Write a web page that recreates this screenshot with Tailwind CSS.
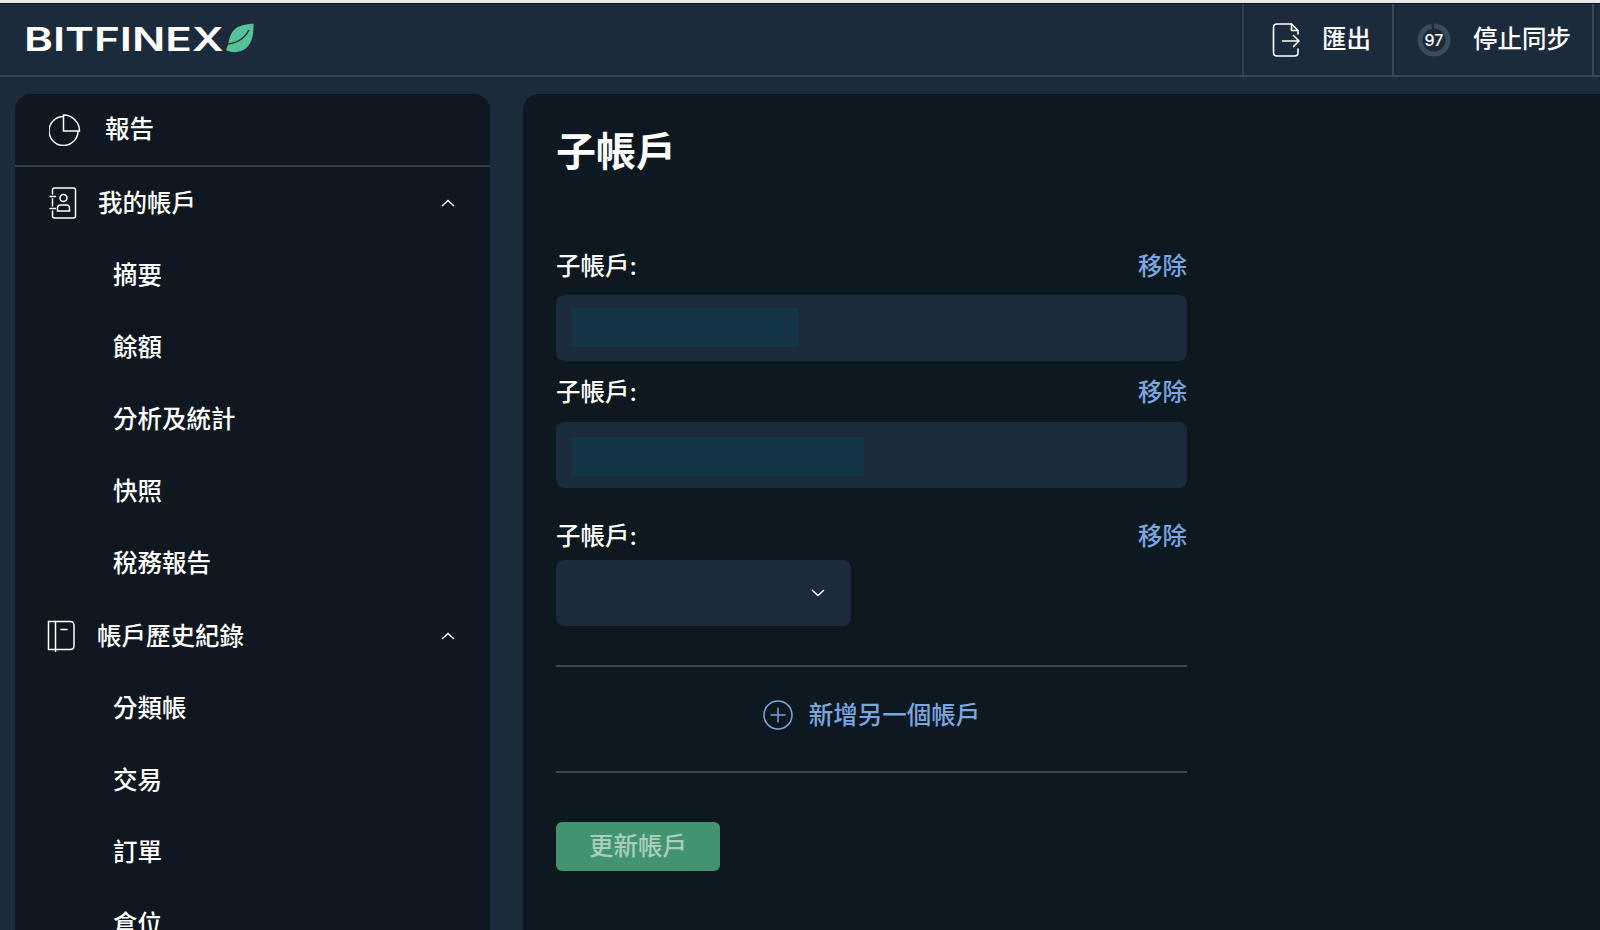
<!doctype html>
<html lang="zh-Hant">

<head>
    <meta charset="UTF-8">
    <meta name="viewport" content="width=device-width, initial-scale=1.0">
    <title>Bitfinex 子帳戶</title>
    <script src="https://cdn.jsdelivr.net/npm/@tailwindcss/browser@4"></script>
</head>

<body class="h-[930px] overflow-hidden flex flex-col bg-[#1c2b3c] text-white font-['Inter','Noto_Sans_CJK_TC',sans-serif] text-[24.5px] leading-8 font-medium">
    <div class="h-[3px] bg-[#e9e9e9] shrink-0"></div>
    <div class="h-px bg-[#0b1219] shrink-0"></div>

    <!--header-->
    <header class="h-[73px] shrink-0 flex items-stretch justify-between border-b-2 border-[#36485a] pr-[6px]">
        <div class="flex items-start pl-[24px] pt-[20px]">
            <span class="block w-[146px] origin-left scale-x-[1.33] font-['Inter',sans-serif] font-semibold text-[33px] leading-[30px] whitespace-nowrap">BITFINEX</span>
            <svg class="w-[29px] h-[30px] ml-[55px] -mt-[1px]" viewBox="0 0 29 30">
                <path fill="#55c194" d="M28.5 0.5C28.8 12 27 21 20 26C14 30 6 30 1 27C5 20 3 9 13 4C18 1.500 24 1 28.500 0.500Z" />
                <path fill="none" stroke="#1c2b3c" stroke-width="1.500" d="M0 21C9 21 18 18 24 7" />
            </svg>
        </div>
        <div class="flex">
            <div class="w-[150px] flex items-center border-l-2 border-[#2f4051] pl-[28px]">
                <svg class="w-[28px] h-[34px]" viewBox="0 0 28 34" fill="none" stroke="white" stroke-width="1.600" stroke-linecap="round" stroke-linejoin="round">
                    <path d="M26 11V7.500L19.500 1H5Q1.500 1 1.500 4.500V29.500Q1.500 33 5 33H22.500Q26 33 26 29.500V26" />
                    <path d="M19.500 1V7.500H26" />
                    <path d="M10.500 18H27M21.500 12.500L27 18L21.500 23.500" />
                </svg>
                <span class="ml-[22px] pb-[2px] whitespace-nowrap">匯出</span>
            </div>
            <div class="w-[202px] flex items-center border-x-2 border-[#36485a] pl-[23px]">
                <div class="relative w-[34px] h-[34px] flex items-center justify-center">
                    <svg class="absolute inset-0 -rotate-90" viewBox="0 0 34 34" fill="none">
                        <circle cx="17" cy="17" r="14" stroke="#3a4b5c" stroke-width="5" stroke-dasharray="85 3" />
                    </svg>
                    <span class="relative text-base leading-none font-medium">97</span>
                </div>
                <span class="ml-[22px] pb-[2px] whitespace-nowrap">停止同步</span>
            </div>
        </div>
    </header>

    <div class="flex-1 min-h-0 flex gap-[33px] pl-[15px] pt-[17px]">
        <!--sidebar-->
        <aside class="w-[475px] shrink-0 bg-[#0f1821] rounded-t-2xl overflow-hidden">
            <a class="h-[73px] flex items-center border-b-2 border-[#2e3f50] pl-[34px]">
                <svg class="w-[32px] h-[32px]" viewBox="0 0 32 32" fill="none" stroke="white" stroke-width="1.500">
                    <path d="M14.500 2.500A14.500 14.500 0 1 0 29 17" />
                    <path d="M14.500 1A16 16 0 0 1 30.500 17H14.500Z" />
                </svg>
                <span class="ml-[24px] pb-[2px]">報告</span>
            </a>

            <a class="h-[72px] flex items-center pl-[34px] pr-[35px]">
                <svg class="w-[28px] h-[32px]" viewBox="0 0 28 32" fill="none" stroke="white" stroke-width="1.500" stroke-linecap="round">
                    <path d="M3.500 7V3Q3.500 1 5.500 1H24.500Q26.500 1 26.500 3V29Q26.500 31 24.500 31H5.500Q3.500 31 3.500 29V24M3.500 12V19" />
                    <path d="M1 9.500H6.500M1 21.500H6.500" />
                    <circle cx="14.500" cy="11" r="3.500" />
                    <path d="M8.500 24V21Q8.500 18 11.500 18H17.500Q20.500 18 20.500 21V24Z" />
                </svg>
                <span class="ml-[21px]">我的帳戶</span>
                <svg class="w-[14px] h-[8px] ml-auto" viewBox="0 0 14 8" fill="none" stroke="white" stroke-width="1.500">
                    <path d="M1 7L7 1.500L13 7" />
                </svg>
            </a>
            <a class="h-[72px] flex items-center pl-[98px]">摘要</a>
            <a class="h-[72px] flex items-center pl-[98px]">餘額</a>
            <a class="h-[72px] flex items-center pl-[98px]">分析及統計</a>
            <a class="h-[72px] flex items-center pl-[98px]">快照</a>
            <a class="h-[72px] flex items-center pl-[98px]">稅務報告</a>

            <a class="h-[72px] mt-px flex items-center pl-[32px] pr-[35px]">
                <svg class="w-[28px] h-[32px]" viewBox="0 0 28 32" fill="none" stroke="white" stroke-width="1.500" stroke-linecap="round">
                    <path d="M1.500 1.500H23Q27 1.500 27 5.500V25.500Q27 29.500 23 29.500H1.500Z" />
                    <path d="M8.500 1.500V31.500M14 9.500H20" />
                </svg>
                <span class="ml-[22px]">帳戶歷史紀錄</span>
                <svg class="w-[14px] h-[8px] ml-auto" viewBox="0 0 14 8" fill="none" stroke="white" stroke-width="1.500">
                    <path d="M1 7L7 1.500L13 7" />
                </svg>
            </a>
            <a class="h-[72px] flex items-center pl-[98px]">分類帳</a>
            <a class="h-[72px] flex items-center pl-[98px]">交易</a>
            <a class="h-[72px] flex items-center pl-[98px]">訂單</a>
            <a class="h-[72px] flex items-center pl-[98px]">倉位</a>
        </aside>

        <!--conteudo-->
        <main class="flex-1 bg-[#0d1820] rounded-tl-2xl pl-[33px] pt-[30px]">
            <h1 class="text-[40px] leading-[56px] font-bold">子帳戶</h1>

            <div class="w-[631px] mt-[70px]">
                <div class="flex justify-between">
                    <span>子帳戶:</span>
                    <a class="text-[#7aa6e0]">移除</a>
                </div>
                <div class="h-[66px] mt-[13px] bg-[#1c2b3c] rounded-lg pl-[15px] pt-[13px]">
                    <div class="w-[227px] h-[39px] bg-[#143546]"></div>
                </div>

                <div class="flex justify-between mt-[15px]">
                    <span>子帳戶:</span>
                    <a class="text-[#7aa6e0]">移除</a>
                </div>
                <div class="h-[66px] mt-[14px] bg-[#1c2b3c] rounded-lg pl-[15px] pt-[15px]">
                    <div class="w-[293px] h-[39px] bg-[#143546]"></div>
                </div>

                <div class="flex justify-between mt-[32px]">
                    <span>子帳戶:</span>
                    <a class="text-[#7aa6e0]">移除</a>
                </div>
                <div class="w-[295px] h-[66px] mt-[8px] bg-[#1c2b3c] rounded-lg flex items-center justify-end pr-[26px]">
                    <svg class="w-[14px] h-[8px]" viewBox="0 0 14 8" fill="none" stroke="white" stroke-width="1.500">
                        <path d="M1 1L7 6.500L13 1" />
                    </svg>
                </div>

                <div class="mt-[39px] h-[108px] border-y-2 border-[#36485a] flex items-center justify-center pb-[8px] text-[#7aa6e0]">
                    <svg class="w-[30px] h-[30px]" viewBox="0 0 30 30" fill="none" stroke="#7aa6e0" stroke-width="1.500">
                        <circle cx="15" cy="15" r="14" />
                        <path d="M15 7.500V22.500M7.500 15H22.500" />
                    </svg>
                    <span class="ml-[16px]">新增另一個帳戶</span>
                </div>

                <button class="w-[164px] h-[49px] mt-[49px] pb-[2px] bg-[#42946f] text-[#a9cfbc] rounded-md">更新帳戶</button>
            </div>
        </main>
    </div>
</body>

</html>
